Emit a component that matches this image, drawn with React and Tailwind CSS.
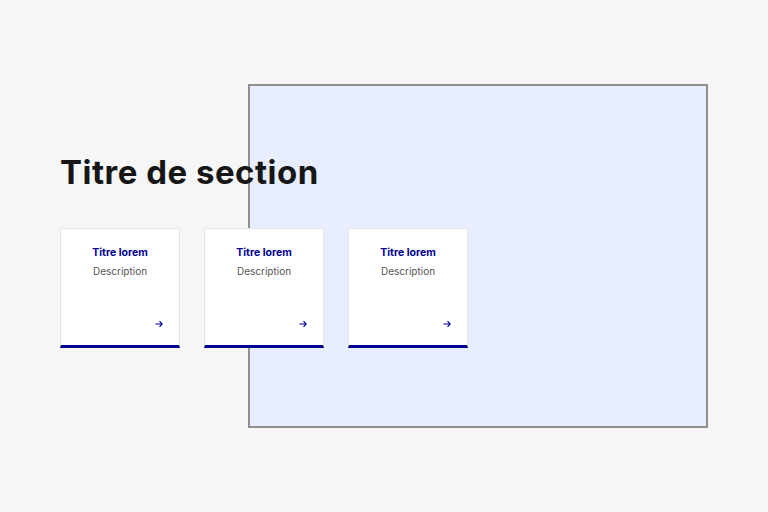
import React from 'react';

const cards = [
  { title: 'Titre lorem', description: 'Description' },
  { title: 'Titre lorem', description: 'Description' },
  { title: 'Titre lorem', description: 'Description' },
];

function ArrowIcon() {
  return (
    <svg width="8" height="8" viewBox="0 0 8 8" fill="none" className="text-[#000091]">
      <path d="M0.5 4H7M4.5 1.2L7.2 4L4.5 6.8" stroke="currentColor" strokeWidth="1.1" />
    </svg>
  );
}

function Card({ title, description }) {
  return (
    <div className="w-[120px] h-[120px] flex flex-col bg-white border border-[#e5e5e5] border-b-[3px] border-b-[#000091]">
      <div className="flex flex-col items-center pt-[16px]">
        <h3 className="text-[10.5px] leading-[16px] font-bold text-[#000091]">{title}</h3>
        <p className="mt-[3px] text-[10px] leading-[14px] text-[#555]">{description}</p>
      </div>
      <div className="mt-auto flex justify-end pr-[16px] pb-[17px]">
        <ArrowIcon />
      </div>
    </div>
  );
}

export default function App() {
  return (
    <div
      className="relative w-full h-[512px] bg-[#f6f6f6] overflow-hidden"
      style={{ fontFamily: 'Inter, "Open Sans", sans-serif' }}
    >
      <div className="absolute left-[248px] top-[84px] w-[460px] h-[344px] border-2 border-[#8f8f8f] bg-[#e8edff]" />
      <div className="relative pl-[60px] pt-[150px]">
        <h2 className="text-[33px] leading-[44px] tracking-[0.5px] font-bold text-[#161616]">Titre de section</h2>
        <div className="mt-[34px] flex gap-[24px]">
          {cards.map((card, i) => (
            <Card key={i} {...card} />
          ))}
        </div>
      </div>
    </div>
  );
}
